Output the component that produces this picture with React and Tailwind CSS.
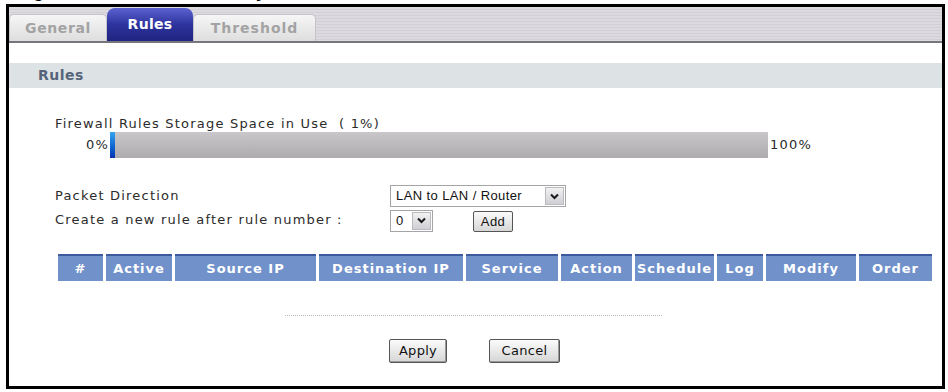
import React from "react";

const columns = [
  { label: "#", w: "w-[45px]" },
  { label: "Active", w: "w-[66px]" },
  { label: "Source IP", w: "w-[141px]" },
  { label: "Destination IP", w: "w-[144px]" },
  { label: "Service", w: "w-[92px]" },
  { label: "Action", w: "w-[71px]" },
  { label: "Schedule", w: "w-[79px]" },
  { label: "Log", w: "w-[46px]" },
  { label: "Modify", w: "w-[90px]" },
  { label: "Order", w: "w-[73px]" },
];

function Chevron() {
  return (
    <svg width="9" height="7" viewBox="0 0 9 7">
      <path d="M1 1.5 L4.5 5 L8 1.5" fill="none" stroke="#1a1a1a" strokeWidth="2" />
    </svg>
  );
}

function Select({ text, w }) {
  return (
    <div className={`flex h-[22px] ${w} border border-[#a5a5a5] bg-white`}>
      <div className="flex-1 flex items-center pl-[5px] text-[13px] tracking-[0.4px] text-[#111] font-['Liberation_Sans',sans-serif]">
        {text}
      </div>
      <div className="w-[19px] m-[1px] flex items-center justify-center bg-gradient-to-b from-[#f2f2f2] to-[#cfcfd4] border border-[#b9b9c0]">
        <Chevron />
      </div>
    </div>
  );
}

function Button({ children, w }) {
  return (
    <div
      className={`${w} h-[24px] flex items-center justify-center rounded-[2px] border border-[#555] bg-gradient-to-b from-[#fbfbfb] to-[#d6d6d6] text-[13px] tracking-[0.3px] text-[#111] shadow-[inset_-1px_-1px_0_#999]`}
    >
      {children}
    </div>
  );
}

export default function App() {
  return (
    <div className="w-[948px] h-[392px] bg-white overflow-hidden font-['DejaVu_Sans',sans-serif]">
      {/* figure caption, mostly cut off above the shot */}
      <div className="h-[4px] overflow-hidden">
        <div className="mt-[-18px] ml-[17px] text-[18px] leading-[18px] font-bold text-black font-['Liberation_Sans',sans-serif] whitespace-nowrap">
          Figure 150 Firewall Summary
        </div>
      </div>

      <div className="ml-[6px] w-[939px] h-[385px] border-[3px] border-black flex flex-col">
        {/* tabs */}
        <div className="h-[36px] flex items-end border-b-2 border-[#77767c] bg-[repeating-linear-gradient(180deg,#dcdadf_0px,#dcdadf_2px,#d2d0d6_2px,#d2d0d6_3px)]">
          <div className="w-[98px] h-[27px] flex items-center justify-center rounded-t-[5px] border border-b-0 border-[#c4c4c8] bg-gradient-to-b from-[#f6f6f6] to-[#dededf] text-[14px] tracking-[0.6px] font-bold text-[#a3a3a3]">
            General
          </div>
          <div className="w-[86px] h-[33px] flex items-center justify-center rounded-t-[8px] bg-gradient-to-b from-[#5c62d0] via-[#2e339e] to-[#1f2480] text-[14px] tracking-[0.3px] font-bold text-white">
            Rules
          </div>
          <div className="w-[123px] h-[27px] flex items-center justify-center rounded-t-[5px] border border-b-0 border-[#c4c4c8] bg-gradient-to-b from-[#f6f6f6] to-[#dededf] text-[14px] tracking-[1px] font-bold text-[#a3a3a3]">
            Threshold
          </div>
        </div>

        <div className="h-[20px]" />

        {/* section header */}
        <div className="h-[25px] flex items-center pl-[29px] bg-[#dde3e5] text-[14px] tracking-[0.5px] font-bold text-[#56647a]">
          Rules
        </div>

        <div className="pl-[46px] text-[13px] tracking-[1.2px] text-[#2b2b2b]">
          <div className="mt-[28px] leading-[16px]">
            Firewall Rules Storage Space in Use&nbsp; ( 1%)
          </div>

          {/* usage bar */}
          <div className="flex items-center">
            <div className="w-[55px] text-right pr-[1px]">0%</div>
            <div className="w-[658px] h-[26px] flex bg-gradient-to-b from-[#c9c7ca] to-[#adabae]">
              <div className="w-[5px] h-full bg-gradient-to-b from-[#35a3f0] to-[#0a2fb5]" />
            </div>
            <div className="pl-[2px]">100%</div>
          </div>

          {/* packet direction */}
          <div className="mt-[27px] flex items-center">
            <div className="w-[335px]">Packet Direction</div>
            <Select text="LAN to LAN / Router" w="w-[176px]" />
          </div>
          <div className="mt-[2px] flex items-center">
            <div className="w-[335px] mt-[-2px]">Create a new rule after rule number :</div>
            <Select text="0" w="w-[43px]" />
            <div className="ml-[40px] mt-[2px] w-[40px] h-[21px] flex items-center justify-center rounded-[2px] border border-[#555] bg-gradient-to-b from-[#fbfbfb] to-[#d6d6d6] text-[13px] tracking-[0.4px] text-[#111] font-['Liberation_Sans',sans-serif]">
              Add
            </div>
          </div>

          {/* table header */}
          <div className="mt-[22px] ml-[3px] flex gap-[3px]">
            {columns.map((c) => (
              <div
                key={c.label}
                className={`${c.w} h-[27px] flex items-center justify-center border-t-2 border-[#3e5a9e] bg-[#7191cb] text-[13px] tracking-[1px] font-bold text-white whitespace-nowrap overflow-hidden`}
              >
                {c.label}
              </div>
            ))}
          </div>

          <div className="mt-[34px] ml-[230px] w-[377px] border-t border-dotted border-[#b8b8b8]" />

          <div className="mt-[23px] ml-[334px] flex gap-[42px]">
            <Button w="w-[58px]">Apply</Button>
            <Button w="w-[71px]">Cancel</Button>
          </div>
        </div>
      </div>
    </div>
  );
}
